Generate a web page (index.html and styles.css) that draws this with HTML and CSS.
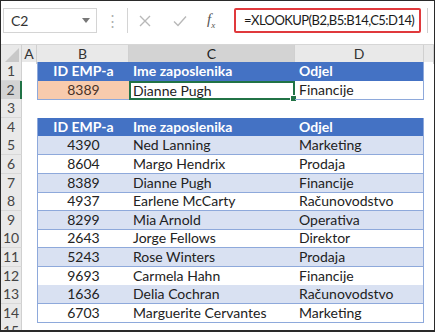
FILE: index.html
```html
<!DOCTYPE html>
<html lang="hr">
<head>
    <meta charset="UTF-8">
    <title>XLOOKUP primjer</title>
    <link rel="stylesheet" href="styles.css">
</head>
<body>
    <div class="window">
        <!-- Traka formule -->
        <div class="formula-bar">
            <div class="name-box">
                <span>C2</span>
                <svg class="caret" width="8" height="5" viewBox="0 0 8 5"><path d="M0 0h8L4 5z" fill="#777"/></svg>
            </div>
            <div class="grip">&#8942;</div>
            <div class="formula-area">
                <div class="fx-tools">
                    <svg class="tool" width="12" height="12" viewBox="0 0 12 12"><path d="M1 1l10 10M11 1L1 11" stroke="#b8b8b8" stroke-width="1.4" fill="none"/></svg>
                    <svg class="tool" width="14" height="12" viewBox="0 0 14 12"><path d="M1 6.5l4 4L13 1.5" stroke="#b8b8b8" stroke-width="1.4" fill="none"/></svg>
                    <span class="fx">f<sub>x</sub></span>
                </div>
                <div class="formula">=XLOOKUP(B2,B5:B14,C5:D14)</div>
            </div>
        </div>

        <!-- Radni list -->
        <div class="sheet">
            <div class="row col-heads">
                <div class="corner"><svg width="14" height="14" viewBox="0 0 14 14"><path d="M14 0v14H0z" fill="#c8c8c8"/></svg></div>
                <div class="colh">A</div>
                <div class="colh">B</div>
                <div class="colh active">C</div>
                <div class="colh">D</div>
                <div class="colh"></div>
            </div>

            <div class="row">
                <div class="rowh">1</div>
                <div class="cell"></div>
                <div class="cell head first center">ID EMP-a</div>
                <div class="cell head">Ime zaposlenika</div>
                <div class="cell head last">Odjel</div>
                <div class="cell"></div>
            </div>
            <div class="row">
                <div class="rowh active">2</div>
                <div class="cell"></div>
                <div class="cell lookup first center boxed">8389</div>
                <div class="cell result selected boxed">Dianne Pugh<span class="handle"></span></div>
                <div class="cell result last boxed">Financije</div>
                <div class="cell"></div>
            </div>
            <div class="row">
                <div class="rowh">3</div>
                <div class="cell"></div><div class="cell"></div><div class="cell"></div><div class="cell"></div><div class="cell"></div>
            </div>

            <div class="row">
                <div class="rowh">4</div>
                <div class="cell"></div>
                <div class="cell head first center">ID EMP-a</div>
                <div class="cell head">Ime zaposlenika</div>
                <div class="cell head last">Odjel</div>
                <div class="cell"></div>
            </div>
        </div>
    </div>

    <script>
        // Podaci tablice zaposlenika
        const zaposlenici = [
            ['4390', 'Ned Lanning', 'Marketing'],
            ['8604', 'Margo Hendrix', 'Prodaja'],
            ['8389', 'Dianne Pugh', 'Financije'],
            ['4937', 'Earlene McCarty', 'Računovodstvo'],
            ['8299', 'Mia Arnold', 'Operativa'],
            ['2643', 'Jorge Fellows', 'Direktor'],
            ['5243', 'Rose Winters', 'Prodaja'],
            ['9693', 'Carmela Hahn', 'Financije'],
            ['1636', 'Delia Cochran', 'Računovodstvo'],
            ['6703', 'Marguerite Cervantes', 'Marketing']
        ];

        const sheet = document.querySelector('.sheet');

        zaposlenici.forEach((z, i) => {
            const row = document.createElement('div');
            row.className = 'row';
            const band = i % 2 === 0 ? 'band' : 'plain';
            row.innerHTML =
                `<div class="rowh">${i + 5}</div>` +
                `<div class="cell"></div>` +
                `<div class="cell ${band} first center boxed">${z[0]}</div>` +
                `<div class="cell ${band} boxed">${z[1]}</div>` +
                `<div class="cell ${band} last boxed">${z[2]}</div>` +
                `<div class="cell"></div>`;
            sheet.appendChild(row);
        });

        // Djelomično vidljiv red 15
        const zadnji = document.createElement('div');
        zadnji.className = 'row';
        zadnji.innerHTML = '<div class="rowh">15</div><div class="cell"></div>';
        sheet.appendChild(zadnji);
    </script>
</body>
</html>
```

FILE: styles.css
```css
body {
    margin: 0;
    font-family: Lato, "Open Sans", sans-serif;
    background: #fff;
}

.window {
    width: 435px;
    height: 332px;
    box-sizing: border-box;
    border: 1px solid #2a2a2a;
    border-bottom-width: 2px;
    overflow: hidden;
    background: #fff;
}

/* Traka formule */
.formula-bar {
    height: 43px;
    display: flex;
    align-items: flex-start;
    padding-top: 7px;
    box-sizing: border-box;
}

.name-box {
    width: 94px;
    height: 25px;
    margin-left: 2px;
    box-sizing: border-box;
    border: 1px solid #d4d4d4;
    display: flex;
    align-items: center;
    justify-content: space-between;
    padding: 0 6px 0 7px;
    font-size: 14px;
    color: #333;
}

.grip {
    width: 30px;
    text-align: center;
    color: #b0b0b0;
    font-size: 15px;
    line-height: 25px;
}

.formula-area {
    flex: 1;
    height: 25px;
    margin-right: 6px;
    border-left: 1px solid #d4d4d4;
    border-right: 1px solid #cfcfcf;
    display: flex;
    align-items: center;
}

.fx-tools {
    width: 106px;
    display: flex;
    align-items: center;
    padding-left: 11px;
    box-sizing: border-box;
}

.fx-tools .tool {
    margin-right: 22px;
}

.fx-tools .tool + .tool {
    margin-right: 20px;
}

.fx {
    font-family: "Liberation Serif", serif;
    font-style: italic;
    font-size: 15px;
    color: #555;
}

.fx sub {
    font-size: 9px;
}

.formula {
    height: 25px;
    width: 187px;
    box-sizing: border-box;
    border: 2px solid #e0393c;
    border-radius: 2px;
    padding-left: 8px;
    font-size: 13px;
    letter-spacing: -0.55px;
    line-height: 21px;
    color: #1a1a1a;
    white-space: nowrap;
}

/* Mreža radnog lista */
.row {
    display: grid;
    grid-template-columns: 21px 15px 92px 166px 129px 1fr;
    height: 18.6px;
}

.col-heads {
    height: 18px;
    background: #e9e9e9;
    border-top: 1px solid #d6d6d6;
    box-sizing: border-box;
}

.corner {
    display: flex;
    align-items: flex-end;
    justify-content: flex-end;
    padding: 0 2px 2px 0;
    border-right: 1px solid #d0d0d0;
}

.colh {
    text-align: center;
    font-size: 14px;
    line-height: 17px;
    color: #333;
    border-right: 1px solid #d0d0d0;
}

.colh.active {
    background: #d3d3d3;
    border-bottom: 2px solid #217346;
    color: #222;
}

.rowh {
    background: #e9e9e9;
    border-right: 1px solid #d0d0d0;
    border-bottom: 1px solid #d8d8d8;
    box-sizing: border-box;
    text-align: center;
    font-size: 14px;
    line-height: 18px;
    color: #444;
}

.rowh.active {
    background: #d3d3d3;
    border-right: 2px solid #217346;
}

.cell {
    font-size: 14px;
    line-height: 18px;
    padding-left: 4px;
    color: #222;
    white-space: nowrap;
    box-sizing: border-box;
    position: relative;
}

.cell.center {
    text-align: center;
    padding-left: 0;
}

.cell.head {
    background: #4472c4;
    color: #fff;
    font-weight: bold;
}

.cell.lookup {
    background: #f8cbad;
    color: #4a3328;
}

.cell.band {
    background: #d9e1f2;
}

.cell.boxed {
    border-bottom: 1px solid #8ea9db;
}

.cell.first {
    border-left: 1px solid #8ea9db;
}

.cell.last {
    border-right: 1px solid #8ea9db;
}

.cell.selected {
    border: 2px solid #217346;
    line-height: 15px;
    padding-left: 2px;
}

.handle {
    position: absolute;
    right: -4px;
    bottom: -4px;
    width: 5px;
    height: 5px;
    background: #217346;
    border: 1px solid #fff;
}
```
